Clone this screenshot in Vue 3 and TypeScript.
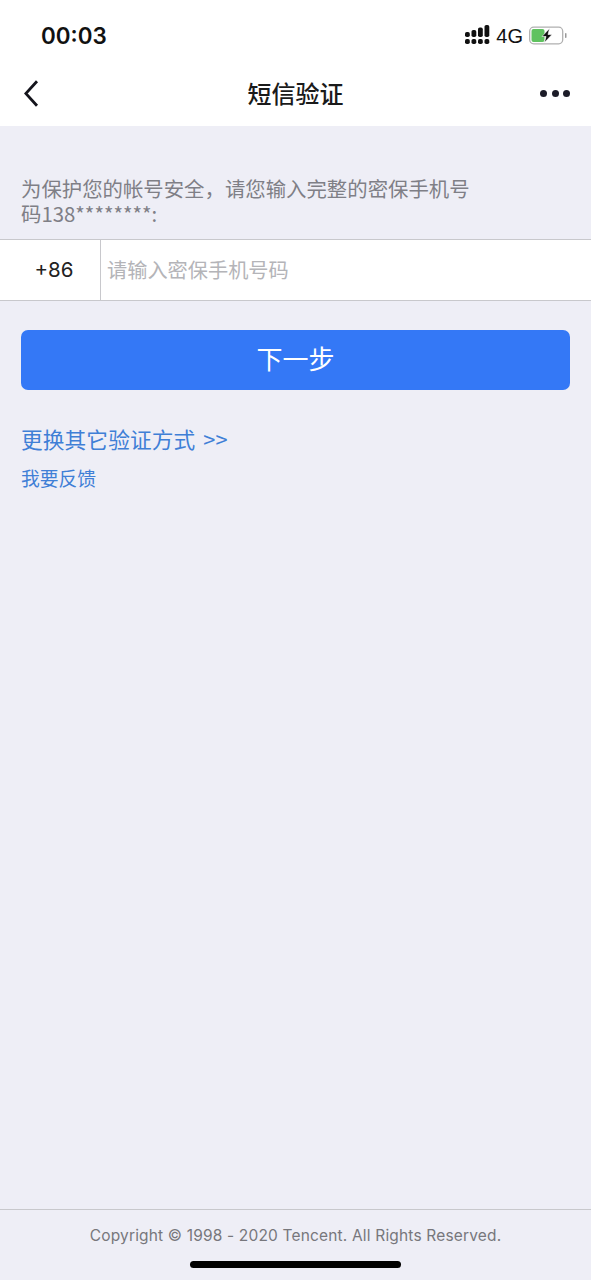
<script setup lang="ts">
const copyright: string = "Copyright © 1998 - 2020 Tencent. All Rights Reserved."
</script>

<template>
  <div class="page">
    <header class="top">
      <div class="status">
        <span class="time">00:03</span>
        <div class="status-right">
          <svg class="signal" width="25" height="19" viewBox="0 0 25 19">
            <rect x="0" y="7" width="4.800" height="5" rx="1.800" fill="#111" />
            <rect x="0" y="14" width="4.800" height="5" rx="1.800" fill="#111" />
            <rect x="6.500" y="5" width="4.800" height="7" rx="1.800" fill="#111" />
            <rect x="6.500" y="14" width="4.800" height="5" rx="1.800" fill="#111" />
            <rect x="13" y="2.500" width="4.800" height="9.500" rx="1.800" fill="#111" />
            <rect x="13" y="14" width="4.800" height="5" rx="1.800" fill="#111" />
            <rect x="19.500" y="0" width="4.800" height="12" rx="1.800" fill="#111" />
            <rect x="19.500" y="14" width="4.800" height="5" rx="1.800" fill="#111" />
          </svg>
          <span class="net">4G</span>
          <svg class="battery" width="38" height="19" viewBox="0 0 38 19">
            <rect x="0.700" y="1.200" width="33" height="16.600" rx="4" fill="none" stroke="#b0b0b0" stroke-width="1.300" />
            <rect x="2.500" y="3" width="13" height="13" rx="2" fill="#5fc25f" />
            <path d="M20.500 2.500 L13 10.500 L17 10.500 L15.500 16.500 L23 8.500 L19 8.500 Z" fill="#111" stroke="#fff" stroke-width="0.600" />
            <rect x="36" y="7" width="1.500" height="5" rx="0.700" fill="#999" />
          </svg>
        </div>
      </div>
      <nav class="nav">
        <svg class="back" width="15" height="27" viewBox="0 0 15 27">
          <path d="M13 1.200 L1.800 13.500 L13 25.800" fill="none" stroke="#14141c" stroke-width="2.800" />
        </svg>
        <h1 class="title">短信验证</h1>
        <div class="more">
          <i v-for="d in 3" :key="d" class="dot"></i>
        </div>
      </nav>
    </header>

    <main class="body">
      <p class="hint">为保护您的帐号安全，请您输入完整的密保手机号码138********:</p>
      <div class="field">
        <span class="code">+86</span>
        <span class="placeholder">请输入密保手机号码</span>
      </div>
      <button class="next" type="button">下一步</button>
      <a class="switch">更换其它验证方式 &gt;&gt;</a>
      <a class="feedback">我要反馈</a>
    </main>

    <footer class="foot">
      <span class="copy">{{ copyright }}</span>
      <i class="home"></i>
    </footer>
  </div>
</template>

<style>
html, body { margin: 0; padding: 0; background: #eeeef6; }
</style>

<style scoped>
.page {
  width: 591px;
  height: 1280px;
  display: flex;
  flex-direction: column;
  background: #eeeef6;
  font-family: "Noto Sans CJK SC", "Liberation Sans", sans-serif;
  overflow: hidden;
}
.top { height: 126px; background: #fff; flex: none; }
.status {
  height: 64px;
  box-sizing: border-box;
  padding: 7px 24px 0 41px;
  display: flex;
  align-items: center;
  justify-content: space-between;
}
.time {
  font: 600 22.400px/30px Inter, "Liberation Sans", sans-serif;
  color: #111;
}
.status-right { display: flex; align-items: center; gap: 6px; }
.signal { margin-top: -3px; }
.net { font: 400 20px/24px "Liberation Sans", sans-serif; color: #111; }
.nav {
  height: 60px;
  position: relative;
  display: flex;
  align-items: center;
  justify-content: space-between;
  padding: 0 21px 0 24px;
}
.back { margin-top: -1px; }
.title {
  position: absolute;
  left: 0;
  right: 0;
  top: -1px;
  margin: 0;
  text-align: center;
  font-size: 24px;
  font-weight: 500;
  line-height: 60px;
  color: #1a1a1a;
}
.more { display: flex; gap: 4.500px; margin-top: -1px; }
.dot { width: 7px; height: 7px; border-radius: 50%; background: #1c1c28; }
.body { flex: 1; display: flex; flex-direction: column; align-items: flex-start; }
.hint {
  margin: 50px 0 0;
  padding: 0 110px 0 21px;
  font-size: 20.400px;
  line-height: 24.500px;
  color: #7f7f86;
}
.field {
  margin-top: 14px;
  width: 100%;
  height: 62px;
  box-sizing: border-box;
  display: flex;
  align-items: center;
  background: #fff;
  border-top: 1px solid #c8c8cc;
  border-bottom: 1px solid #c8c8cc;
}
.code {
  width: 92px;
  padding-left: 8px;
  height: 100%;
  flex: none;
  display: flex;
  align-items: center;
  justify-content: center;
  border-right: 1px solid #c8c8cc;
  font: 400 20.500px/24px Inter, "Liberation Sans", sans-serif;
  color: #222;
}
.placeholder { margin-left: 6px; margin-top: -2px; font-size: 20.200px; color: #b4b4b8; }
.next {
  margin: 29px 0 0 21px;
  width: 549px;
  height: 60px;
  border: 0;
  border-radius: 7px;
  background: #3478f6;
  color: #fff;
  font-family: inherit;
  font-size: 26px;
  padding: 0 0 5px;
}
.switch {
  margin: 34px 0 0 21px;
  font-size: 21.700px;
  line-height: 30px;
  word-spacing: 3px;
  letter-spacing: 0.100px;
  color: #3f7fd6;
}
.feedback {
  margin: 10px 0 0 21px;
  font-size: 18.800px;
  line-height: 28px;
  color: #3f7fd6;
}
.foot {
  height: 71px;
  flex: none;
  box-sizing: border-box;
  border-top: 1px solid #c8c8cc;
  display: flex;
  flex-direction: column;
  align-items: center;
}
.copy {
  margin-top: 15px;
  font: 400 15.500px/22px Inter, "Liberation Sans", sans-serif;
  letter-spacing: 0.170px;
  color: #77777c;
}
.home {
  margin-top: 14px;
  width: 211px;
  height: 7px;
  border-radius: 4px;
  background: #000;
}
</style>
